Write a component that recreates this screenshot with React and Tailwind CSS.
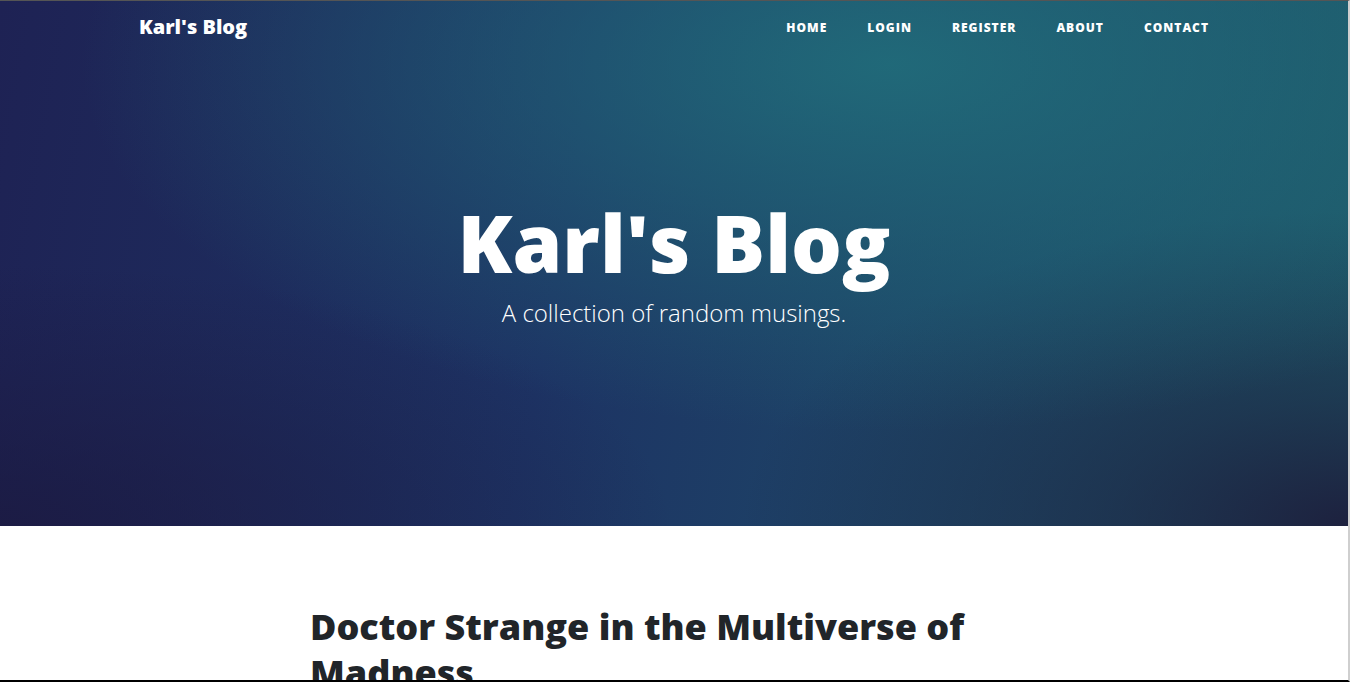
const NAV_LINKS = ['Home', 'Login', 'Register', 'About', 'Contact'];

function Navbar() {
  return (
    <nav className="w-full">
      <div className="mx-auto flex h-[52px] w-[1140px] items-center justify-between px-[35px]">
        <a href="#" className="text-[20px] font-extrabold text-white">
          Karl's Blog
        </a>
        <ul className="flex items-center gap-[40px] pb-[3px]">
          {NAV_LINKS.map((link) => (
            <li key={link}>
              <a
                href="#"
                className="text-[12px] font-extrabold uppercase tracking-[1px] text-white"
              >
                {link}
              </a>
            </li>
          ))}
        </ul>
      </div>
    </nav>
  );
}

function Masthead() {
  return (
    <header className="h-[525px] bg-[radial-gradient(ellipse_60%_70%_at_66%_12%,rgba(33,112,124,0.85)_0%,rgba(33,112,124,0)_100%),radial-gradient(ellipse_45%_60%_at_100%_100%,rgba(29,27,58,0.9)_0%,rgba(29,27,58,0.5)_40%,rgba(29,27,58,0)_100%),radial-gradient(ellipse_50%_50%_at_0%_100%,rgba(27,25,64,0.8)_0%,rgba(27,25,64,0)_100%),linear-gradient(100deg,#1e2254_0%,#1d3364_42%,#1e5a6a_100%)]">
      <Navbar />
      <div className="pt-[141px] text-center text-white">
        <h1 className="text-[80px] font-extrabold leading-[96px]">Karl's Blog</h1>
        <span className="mt-[10px] block text-[24px] font-light leading-[1.1]">
          A collection of random musings.
        </span>
      </div>
    </header>
  );
}

export default function App() {
  return (
    <div className="h-[682px] w-[1350px] overflow-hidden border-t border-b-2 border-r-2 border-t-[#555555] border-b-black border-r-[#cfcfcf] bg-white font-['Open_Sans',sans-serif]">
      <Masthead />
      <main className="mx-auto w-[728px] pt-[78px]">
        <article>
          <h2 className="text-[36px] font-extrabold leading-[46px] text-[#212529]">
            Doctor Strange in the Multiverse of Madness
          </h2>
        </article>
      </main>
    </div>
  );
}
